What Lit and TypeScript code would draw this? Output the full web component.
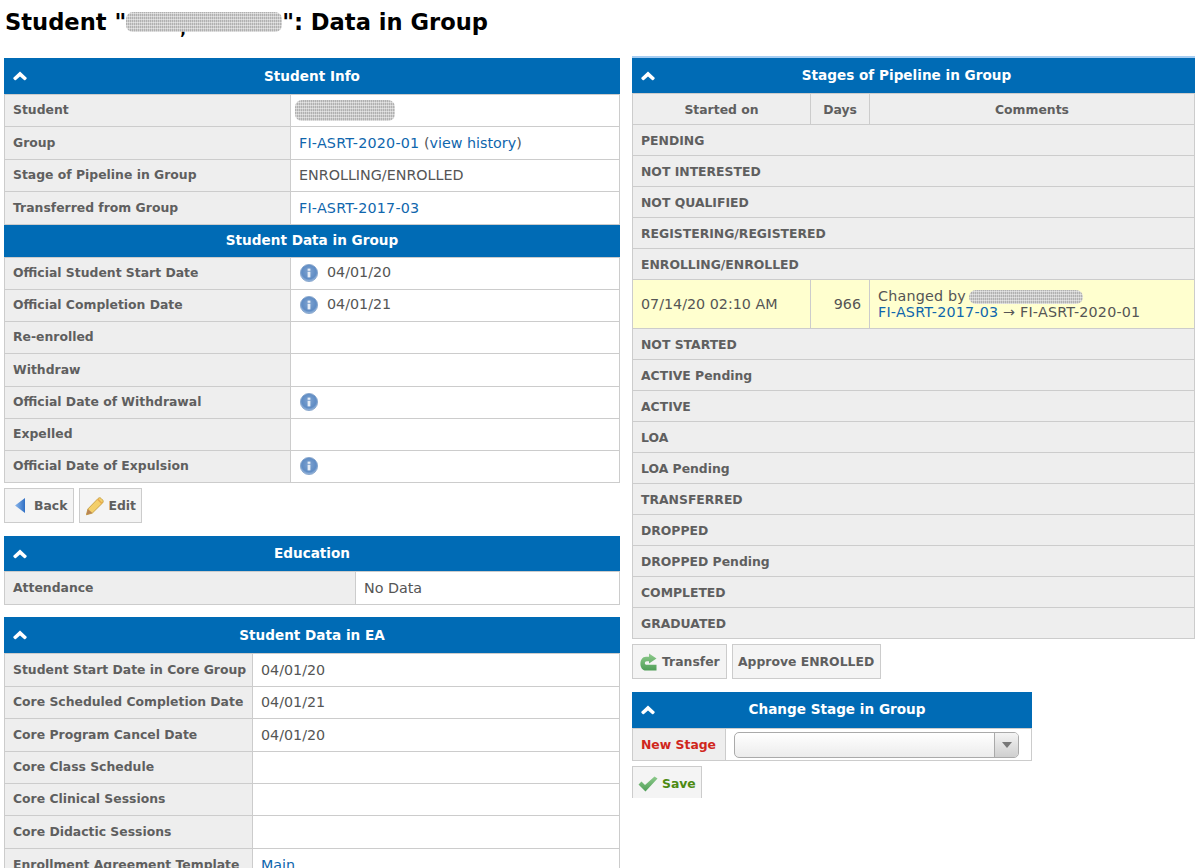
import { LitElement, html, css } from "lit";
import { customElement } from "lit/decorators.js";

const chevron = html`<svg class="chev" width="14" height="10" viewBox="0 0 14 10"><path d="M0.6 6.6 7 0.6l6.4 6a1 1 0 0 1 0 1.4l-1 1a1 1 0 0 1-1.4 0L7 5.4 3 9a1 1 0 0 1-1.4 0l-1-1a1 1 0 0 1 0-1.4z" fill="#fff"/></svg>`;
const info = html`<svg class="ico" width="18" height="18" viewBox="0 0 18 18"><defs><radialGradient id="ig" cx="50%" cy="42%" r="60%"><stop offset="0" stop-color="#7fa3d0"/><stop offset=".7" stop-color="#5f8cc4"/><stop offset="1" stop-color="#a9c4e4"/></radialGradient></defs><circle cx="9" cy="9" r="8.6" fill="url(#ig)" stroke="#7fa0c8" stroke-width=".8"/><rect x="7.6" y="4.6" width="2.8" height="2.2" fill="#e6edf6"/><rect x="7.6" y="7.8" width="2.8" height="5.6" fill="#e6edf6"/></svg>`;

type Row = [string, unknown];

@customElement("app-root")
export class AppRoot extends LitElement {
  static styles = css`
    :host { display: block; height: 868px; overflow: hidden; background: #fff; font-family: "DejaVu Sans", Verdana, sans-serif; font-size: 14.3px; color: #555; }
    * { box-sizing: border-box; }
    h1 { margin: 0; padding: 8px 0 0 5px; height: 56px; font-size: 22.6px; line-height: 28px; font-weight: 700; color: #000; }
    .cols { display: flex; align-items: flex-start; padding-left: 4px; gap: 12px; }
    .left { width: 616px; padding-top: 2px; }
    .right { width: 563px; border-top: 2px solid #a6cdf2; }
    .hdr { position: relative; background: #006bb5; color: #fff; font-weight: 700; font-size: 13.6px; text-align: center; display: flex; align-items: center; justify-content: center; }
    .h36 { height: 36px; }
    .h32 { height: 32px; padding-bottom: 2px; }
    .h35 { height: 35px; padding-bottom: 2px; }
    .h36m { height: 36px; margin-top: 12px; }
    .shift-l { padding: 0 14px 2px 0; }
    .shift-r { padding: 0 0 2px 10px; }
    .chev { position: absolute; left: 9px; top: 50%; margin-top: -5px; }
    table { width: 100%; border-collapse: collapse; table-layout: fixed; background: #fff; }
    td, th { border: 1px solid #ccc; padding: 0 8px; font-size: 14.3px; font-weight: 400; overflow: hidden; white-space: nowrap; }
    .kv td { padding-bottom: 1px; }
    .kv td.lbl { padding-bottom: 2px; }
    td.lbl { background: #eee; font-weight: 700; color: #5f5f5f; font-size: 12.4px; }
    th { background: #eee; font-weight: 700; text-align: center; font-size: 12.4px; color: #5f5f5f; height: 31px; }
    a { color: #0f66ad; text-decoration: none; }
    .wide { letter-spacing: .2px; }
    .ico { vertical-align: middle; margin: 0 9px 0 1px; }
    .btns { display: flex; gap: 5px; margin: 5px 0 13px; }
    .btn { height: 35px; border: 1px solid #ccc; background: #f4f4f4; font-weight: 700; font-size: 12.4px; color: #5f5f5f; display: flex; align-items: center; padding: 0 5px; gap: 4px; white-space: nowrap; }
    .w-back { width: 70px; }
    .w-back span { margin-left: 4px; }
    .w-edit { width: 63px; padding-left: 5px; }
    .w-transfer { width: 95px; }
    .w-approve { width: 149px; }
    .save { width: 70px; height: 32px; margin-top: 5px; padding-top: 2px; border-bottom: 0; color: #4d8a12; }
    .redact { display: inline-block; position: relative; background:
        repeating-linear-gradient(0deg, rgba(255,255,255,.45) 0 1px, transparent 1px 3px),
        repeating-linear-gradient(90deg, rgba(120,120,120,.35) 0 1px, transparent 1px 2px), #cfcfcf;
      border-radius: 7px; vertical-align: middle; }
    .r-title { width: 156px; height: 20px; margin-top: -3px; }
    .r-title b { position: absolute; left: 54px; bottom: -6px; font-size: 15px; line-height: 15px; color: #000; }
    .r-student { width: 100px; height: 21px; margin-left: -4px; }
    .r-change { width: 114px; height: 14px; margin-left: -2px; letter-spacing: 0; }
    .hl td { background: #ffffcf; }
    .num { text-align: right; }
    .stage td { height: 31px; background: #eee; font-weight: 700; font-size: 12.4px; color: #5f5f5f; }
    td.twoline { line-height: 16px; }
    .box400 { width: 400px; }
    .sel { width: 285px; height: 26px; border: 1px solid #aaa; border-radius: 5px; background: linear-gradient(#fff, #ececec); display: flex; justify-content: flex-end; }
    .arrow { width: 24px; border-left: 1px solid #aaa; background: linear-gradient(#f4f4f4, #cfcfcf); display: flex; align-items: center; justify-content: center; border-radius: 0 4px 4px 0; }
    .arrow i { border: 5px solid transparent; border-top: 6px solid #777; border-bottom: 0; }
    td.red { color: #d0261c; }
    .row32 { height: 32px; }
  `;

  rows(rows: Row[], w: number, heights: number[]) {
    return html`<table class="kv"><colgroup><col style="width:${w}px" /><col /></colgroup>
      ${rows.map(([a, b], i) => html`<tr style="height:${heights[i]}px"><td class="lbl">${a}</td><td>${b}</td></tr>`)}
    </table>`;
  }

  render() {
    const stages1 = ["PENDING", "NOT INTERESTED", "NOT QUALIFIED", "REGISTERING/REGISTERED", "ENROLLING/ENROLLED"];
    const stages2 = ["NOT STARTED", "ACTIVE Pending", "ACTIVE", "LOA", "LOA Pending", "TRANSFERRED", "DROPPED", "DROPPED Pending", "COMPLETED", "GRADUATED"];
    return html`
      <h1>Student "<span class="redact r-title"><b>,</b></span>": Data in Group</h1>
      <div class="cols">
        <div class="left">
          <div class="hdr h36">${chevron}Student Info</div>
          ${this.rows([
            ["Student", html`<span class="redact r-student"></span>`],
            ["Group", html`<a class="wide">FI-ASRT-2020-01</a> (<a>view history</a>)`],
            ["Stage of Pipeline in Group", "ENROLLING/ENROLLED"],
            ["Transferred from Group", html`<a class="wide">FI-ASRT-2017-03</a>`],
          ], 286, [32, 33, 32, 33])}
          <div class="hdr h32">Student Data in Group</div>
          ${this.rows([
            ["Official Student Start Date", html`${info}04/01/20`],
            ["Official Completion Date", html`${info}04/01/21`],
            ["Re-enrolled", ""],
            ["Withdraw", ""],
            ["Official Date of Withdrawal", info],
            ["Expelled", ""],
            ["Official Date of Expulsion", info],
          ], 286, [32, 32, 32, 33, 32, 32, 32])}
          <div class="btns">
            <div class="btn w-back"><svg width="16" height="18" viewBox="0 0 16 18"><defs><linearGradient id="bk" x1="0" x2="1"><stop offset="0" stop-color="#8db8ec"/><stop offset="1" stop-color="#2f6fc4"/></linearGradient></defs><path d="M15 1v15L5 8.5z" fill="url(#bk)"/></svg><span>Back</span></div>
            <div class="btn w-edit"><svg width="20" height="20" viewBox="0 0 20 20"><path d="M1.5 19l1.5-6L13.5 2.2c1-.9 2.2-.9 3 0l1.6 1.6c.8.9.8 2 0 3L7.5 17.3z" fill="#f3cf6a" stroke="#c39a3c" stroke-width=".9"/><path d="M13 3l4.5 4.5" stroke="#e9a94e" stroke-width="1.6"/><path d="M1.5 19l1.5-6 4.5 4.3z" fill="#b98555"/></svg>Edit</div>
          </div>
          <div class="hdr h35">${chevron}Education</div>
          ${this.rows([["Attendance", "No Data"]], 351, [33])}
          <div class="hdr h36m">${chevron}Student Data in EA</div>
          ${this.rows([
            ["Student Start Date in Core Group", "04/01/20"],
            ["Core Scheduled Completion Date", "04/01/21"],
            ["Core Program Cancel Date", "04/01/20"],
            ["Core Class Schedule", ""],
            ["Core Clinical Sessions", ""],
            ["Core Didactic Sessions", ""],
            ["Enrollment Agreement Template", html`<a>Main</a>`],
          ], 248, [33, 32, 33, 32, 32, 33, 33])}
        </div>
        <div class="right">
          <div class="hdr h35 shift-l">${chevron}Stages of Pipeline in Group</div>
          <table>
            <colgroup><col style="width:178px" /><col style="width:59px" /><col /></colgroup>
            <tr><th>Started on</th><th>Days</th><th>Comments</th></tr>
            ${stages1.map((s) => html`<tr class="stage"><td colspan="3">${s}</td></tr>`)}
            <tr class="hl" style="height:49px"><td>07/14/20 02:10 AM</td><td class="num">966</td><td class="twoline wide">Changed by <span class="redact r-change"></span><br /><a>FI-ASRT-2017-03</a> → FI-ASRT-2020-01</td></tr>
            ${stages2.map((s) => html`<tr class="stage"><td colspan="3">${s}</td></tr>`)}
          </table>
          <div class="btns">
            <div class="btn w-transfer"><svg width="20" height="20" viewBox="0 0 20 20"><defs><linearGradient id="tr" x1="0" y1="0" x2="0" y2="1"><stop offset="0" stop-color="#8ecb8c"/><stop offset="1" stop-color="#4f9e57"/></linearGradient></defs><path d="M11 1.5l7.5 5-7.5 5V9.2H8.8c-2.6 0-2.6 3.6 0 3.6H18.5V18.5H8C.6 18.5.6 4.7 8 4.7h3z" fill="url(#tr)"/></svg>Transfer</div>
            <div class="btn w-approve">Approve ENROLLED</div>
          </div>
          <div class="box400">
            <div class="hdr h36 shift-r">${chevron}Change Stage in Group</div>
            <table><colgroup><col style="width:93px" /><col /></colgroup>
              <tr class="row32"><td class="lbl red">New Stage</td><td><div class="sel"><div class="arrow"><i></i></div></div></td></tr>
            </table>
            <div class="btn save"><svg width="20" height="18" viewBox="0 0 20 18"><defs><linearGradient id="sv" x1="0" y1="0" x2="0" y2="1"><stop offset="0" stop-color="#8ecb8c"/><stop offset="1" stop-color="#4f9e57"/></linearGradient></defs><path d="M.5 9.5l3-3 3.5 3.5L16.5 1.5l3 2L7.5 16.5z" fill="url(#sv)"/></svg>Save</div>
          </div>
        </div>
      </div>
    `;
  }
}
